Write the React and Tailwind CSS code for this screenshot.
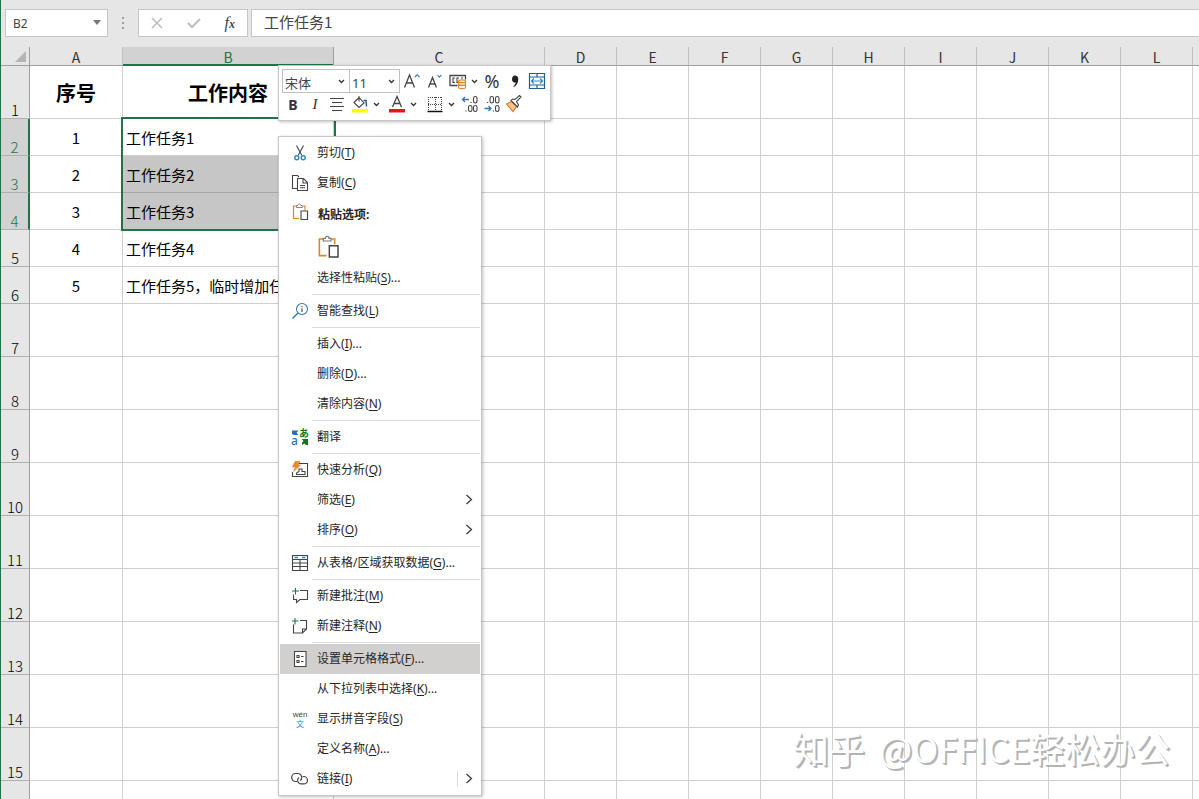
import React from 'react';

const columns = ['A', 'B', 'C', 'D', 'E', 'F', 'G', 'H', 'I', 'J', 'K', 'L', ''];

const rows = [
  { id: 1, tall: true, no: '序号', task: '工作内容' },
  { id: 2, no: '1', task: '工作任务1' },
  { id: 3, no: '2', task: '工作任务2' },
  { id: 4, no: '3', task: '工作任务3' },
  { id: 5, no: '4', task: '工作任务4' },
  { id: 6, no: '5', task: '工作任务5，临时增加任务' },
  ...[7, 8, 9, 10, 11, 12, 13, 14, 15].map((id) => ({ id, tall: true })),
  { id: '', tall: true },
];

const isSelected = (id) => id >= 2 && id <= 4;

const Icon = ({ children, size = 18, className = '' }) => (
  <svg width={size} height={size} viewBox="0 0 18 18" fill="none" stroke="#444" strokeWidth="1.1" className={className} aria-hidden="true">
    {children}
  </svg>
);

const CutIcon = () => (
  <Icon>
    <path d="M5.5 1.5l5.4 10M12.5 1.5l-5.4 10" />
    <circle cx="5.8" cy="13.8" r="2" stroke="#2b88c8" strokeWidth="1.4" />
    <circle cx="12.2" cy="13.8" r="2" stroke="#2b88c8" strokeWidth="1.4" />
  </Icon>
);

const CopyIcon = () => (
  <Icon>
    <path d="M6.5 14.5h-5v-13h5l1.5 1.5M6.500 4.500h6l4 4v8h-10zM12 4.500v4.500h4.500M9 11.500h5M9 13.800h5" />
  </Icon>
);

const PasteIcon = ({ size = 18 }) => (
  <Icon size={size}>
    <path d="M8 15.500h-5.500v-12.500h3M11.500 3h2.500v4" stroke="#e0862a" strokeWidth="1.2" />
    <path d="M5.500 4.500v-2h1.500c0-1 .6-1.500 1.400-1.500s1.400.5 1.400 1.500h1.500v2z" fill="#fff" stroke="#777" strokeWidth=".9" />
    <path d="M10 8h6.500v8.500h-6.500z" fill="#fff" />
  </Icon>
);

const LookupIcon = () => (
  <Icon>
    <circle cx="11" cy="7" r="5.500" stroke="#2b78b8" />
    <path d="M7 11l-5.500 5.500" stroke="#2b78b8" strokeWidth="1.500" />
    <path d="M11 6.300v3.700M11 4v1.200" />
  </Icon>
);

const TranslateIcon = () => (
  <span className="relative block size-[18px]" aria-hidden="true">
    <Icon>
      <path d="M1 2.500h6.500l-2 2.200 2 2.300h-4.500l-2-1z" fill="#1e6fb8" stroke="none" />
      <path d="M10.500 11h6.500v6h-2l-1.500-1.500-2.500 1.500v-2.500l1.500-1.500z" fill="#107c10" stroke="none" />
    </Icon>
    <span className="absolute left-0 top-[7px] text-[12px] font-medium leading-[12px] text-[#1e6fb8]">a</span>
    <span className="absolute left-[8px] top-0 text-[10px] font-bold leading-[10px] text-[#107c10]">あ</span>
  </span>
);

const AnalysisIcon = () => (
  <Icon>
    <path d="M8 2.500h8.500v13h-15v-4.500M5.500 13.500h8.500v-3h-3v-2.500h-3v2.500l-2.500 1.500z" />
    <path d="M4 .5h5l-2 3.500h2.500l-7 6.500 2-4.500h-3z" fill="#ed8b2c" stroke="#d86f10" strokeWidth=".5" />
  </Icon>
);

const TableIcon = () => (
  <Icon>
    <path d="M1.500 1.500h15v15h-15zM1.500 5.500h15M1.500 9h15M1.500 12.500h15M9 5.500v11" />
    <path d="M3.500 3.500h3.500M11 3.500h3.500" stroke="#2b88c8" strokeWidth="1.500" />
  </Icon>
);

const CommentIcon = () => (
  <Icon>
    <path d="M9 3.500h7.500v9h-7.500l-3.500 3v-3h-3v-5" />
    <path d="M4.500 1v6.500M1 4h7" stroke="#217346" />
  </Icon>
);

const NoteIcon = () => (
  <Icon>
    <path d="M9 3.500h6.500v8.500l-4 4h-9v-8.500M15.500 12h-4v4" />
    <path d="M4 1v6.500M1 4h6.500" stroke="#217346" />
  </Icon>
);

const FormatIcon = () => (
  <Icon>
    <path d="M3.500 1.500h11.500v15h-11.500z" fill="#fff" />
    <path d="M6 5.500h2v2h-2zM6 10.500h2v2h-2zM10 6.500h2.500M10 11.500h2.500" />
  </Icon>
);

const PinyinIcon = () => (
  <span className="flex w-[18px] flex-col items-center text-[8px] leading-[9px]" aria-hidden="true">
    <span className="font-['Liberation_Sans',sans-serif] text-[#444]">wén</span>
    <span className="font-['Noto_Sans_CJK_SC',sans-serif] text-[#2b88c8]">文</span>
  </span>
);

const LinkIcon = () => (
  <Icon>
    <path d="M6 11.500h-1.300a4 4 0 010-8h2a4 4 0 014 4q0 2-1.500 3" strokeWidth="1.200" />
    <path d="M11.500 6.500h1.300a3.700 3.700 0 010 7.400h-2.500a3.700 3.700 0 01-3.700-3.700q0-1.800 1.500-2.800" strokeWidth="1.200" />
  </Icon>
);

const ChevronDown = () => (
  <svg width="7" height="5" viewBox="0 0 7 5" fill="none" stroke="#333" strokeWidth="1.300" className="shrink-0" aria-hidden="true">
    <path d="M1 1l2.500 2.500 2.500-2.500" />
  </svg>
);

const menu = [
  { label: '剪切', hotkey: 'T', icon: <CutIcon /> },
  { label: '复制', hotkey: 'C', icon: <CopyIcon /> },
  { heading: '粘贴选项:' },
  { label: '选择性粘贴', hotkey: 'S', more: true },
  { divider: true },
  { label: '智能查找', hotkey: 'L', icon: <LookupIcon /> },
  { divider: true },
  { label: '插入', hotkey: 'I', more: true },
  { label: '删除', hotkey: 'D', more: true },
  { label: '清除内容', hotkey: 'N' },
  { divider: true },
  { label: '翻译', icon: <TranslateIcon /> },
  { divider: true },
  { label: '快速分析', hotkey: 'Q', icon: <AnalysisIcon /> },
  { label: '筛选', hotkey: 'E', submenu: true },
  { label: '排序', hotkey: 'O', submenu: true },
  { divider: true },
  { label: '从表格/区域获取数据', hotkey: 'G', more: true, icon: <TableIcon /> },
  { divider: true },
  { label: '新建批注', hotkey: 'M', icon: <CommentIcon /> },
  { label: '新建注释', hotkey: 'N', icon: <NoteIcon /> },
  { divider: true },
  { label: '设置单元格格式', hotkey: 'F', more: true, icon: <FormatIcon />, active: true },
  { label: '从下拉列表中选择', hotkey: 'K', more: true },
  { label: '显示拼音字段', hotkey: 'S', icon: <PinyinIcon /> },
  { label: '定义名称', hotkey: 'A', more: true },
  { label: '链接', hotkey: 'I', icon: <LinkIcon />, submenu: true, split: true },
];

const MenuItem = ({ item }) => {
  if (item.divider) {
    return <hr className="my-px ml-8 border-t border-[#dcdcdc]" />;
  }

  if (item.heading) {
    return (
      <div>
        <div className="flex h-8 items-center">
          <span className="flex w-[37px] shrink-0 justify-center pb-1 pl-[3px]"><PasteIcon /></span>
          <span className="pl-px pt-[2px] font-bold">{item.heading}</span>
        </div>
        <button type="button" aria-label="粘贴" className="ml-9 flex h-[33px] items-center">
          <PasteIcon size={24} />
        </button>
      </div>
    );
  }

  return (
    <button type="button" className={`flex h-[30px] w-full items-center pb-px text-left ${item.active ? 'bg-[#d2d0ce]' : ''}`}>
      <span className="flex w-[37px] shrink-0 justify-center pl-[3px]">{item.icon}</span>
      <span className="grow whitespace-nowrap">
        {item.label}
        {item.hotkey && <>(<u className="underline-offset-2">{item.hotkey}</u>)</>}
        {item.more && '...'}
      </span>
      {item.submenu && (
        <span className={`flex h-4 w-[23px] items-center justify-center ${item.split ? 'border-l border-[#dcdcdc]' : ''}`}>
          <svg width="8" height="12" viewBox="0 0 8 12" fill="none" stroke="#333" strokeWidth="1.200" aria-hidden="true">
            <path d="M1.500 1l5 4.500-5 4.500" />
          </svg>
        </span>
      )}
    </button>
  );
};

const ContextMenu = () => (
  <div className="absolute left-[277px] top-[136px] z-20 w-[204px] border border-[#c6c6c6] bg-white p-px font-['Noto_Sans','Noto_Sans_CJK_SC',sans-serif] text-[12px] leading-[16px] text-[#262626] shadow-[1px_1px_3px_rgba(0,0,0,0.25)]">
    {menu.map((item, i) => <MenuItem key={i} item={item} />)}
  </div>
);

const FontBox = ({ label, value, className }) => (
  <div className={`relative h-6 border border-[#c0c0c0] ${className}`}>
    <select aria-label={label} className="h-full w-full appearance-none bg-transparent px-[2px] pb-1 text-[13px] leading-[18px] text-[#444]">
      <option>{value}</option>
    </select>
    <span className="pointer-events-none absolute right-1 top-[9px]"><ChevronDown /></span>
  </div>
);

const Tool = ({ label, className = '', children }) => (
  <button type="button" aria-label={label} className={`flex h-5 shrink-0 items-center justify-center ${className}`}>
    {children}
  </button>
);

const MiniToolbar = () => (
  <div className="absolute left-[277px] top-[65px] z-20 w-[273px] border border-[#c6c6c6] bg-white px-[3px] pb-[6px] pt-[3px] font-['Noto_Sans','Noto_Sans_CJK_SC',sans-serif] text-[#333] shadow-[1px_1px_3px_rgba(0,0,0,0.25)]">
    <div className="flex items-center">
      <FontBox label="字体" value="宋体" className="w-[68px]" />
      <FontBox label="字号" value="11" className="w-[50px] border-l-0" />
      <Tool label="增大字号" className="w-6">
        <Icon>
          <path d="M1.500 15.500l5-12.500 5 12.500M3.300 11h6.400" strokeWidth="1.300" />
          <path d="M12 5l2.200-2.300 2.200 2.300" stroke="#2b78b8" />
        </Icon>
      </Tool>
      <Tool label="减小字号" className="w-[22px]">
        <Icon>
          <path d="M2.500 15.500l4-10 4 10M4 12h5" strokeWidth="1.300" />
          <path d="M11.500 3l2 2.200 2-2.200" stroke="#2b78b8" />
        </Icon>
      </Tool>
      <Tool label="会计数字格式" className="w-[34px] gap-1">
        <Icon>
          <path d="M8.500 13.500h-7.500v-10h15.500v4" strokeWidth="1.300" />
          <path d="M6 6h-2v4.500h2M10 6h-2v4.500h1M12 6h2" />
          <path d="M9.500 9c0-1.500 7-1.500 7 0v6.500c0 1.500-7 1.500-7 0z" fill="#fff" stroke="#e0862a" />
          <path d="M9.500 10.500h7M9.500 13.300h7" stroke="#e0862a" strokeWidth="1.500" />
        </Icon>
        <ChevronDown />
      </Tool>
      <Tool label="百分比样式" className="w-6 text-[18px] leading-[20px]">%</Tool>
      <Tool label="千位分隔样式" className="w-[22px]">
        <Icon>
          <path d="M9 3.500c2 0 3.300 1.300 3.300 3.700 0 3.500-1.800 6.300-4.500 7.800l-.5-.8c1.500-1.100 2.300-2.400 2.400-3.700-2 .4-3.700-1-3.700-3.300 0-2.200 1.200-3.700 3-3.700z" fill="#222" stroke="none" />
        </Icon>
      </Tool>
      <Tool label="合并后居中" className="w-[21px]">
        <Icon>
          <path d="M1.500 1.500h15v15h-15zM1.500 5h15M1.500 13h15M9 1.500v3.500M9 13v3.500" stroke="#245f8a" strokeWidth="1.200" />
          <path d="M3.500 9h11M6 6.500l-2.500 2.500 2.500 2.500M12 6.500l2.500 2.500-2.500 2.500" stroke="#2b88c8" strokeWidth="1.200" />
        </Icon>
      </Tool>
    </div>
    <div className="mt-px flex items-center">
      <Tool label="加粗" className="w-[22px] text-[14px] font-bold">B</Tool>
      <Tool label="倾斜" className="w-[22px] font-['Liberation_Serif',serif] text-[15px] italic">I</Tool>
      <Tool label="居中" className="w-[22px]">
        <Icon>
          <path d="M2 3.500h14M4 7.500h10M2 11.500h14M4 15.500h10" strokeWidth="1.200" />
        </Icon>
      </Tool>
      <Tool label="填充颜色" className="w-[35px] gap-1">
        <Icon>
          <path d="M3 7.500l5-5 5 5.500-5 4.500zM8 1v5.500" />
          <path d="M12.500 5.500l2.500 0 .5 6" stroke="#2b5f8a" strokeWidth="1.500" />
          <path d="M1 14h16v3.500h-16z" fill="#ffff00" stroke="none" />
        </Icon>
        <ChevronDown />
      </Tool>
      <Tool label="字体颜色" className="w-[38px] gap-1">
        <Icon>
          <path d="M4.500 12l4.500-10.500 4.500 10.500M6 8.500h6" strokeWidth="1.300" />
          <path d="M1 14h16v3.500h-16z" fill="#e0181c" stroke="none" />
        </Icon>
        <ChevronDown />
      </Tool>
      <Tool label="边框" className="w-[38px] gap-1">
        <Icon>
          <path d="M2 2.500h14M2.500 2v14M9.500 2v14M15.500 2v14M2 9.500h14" strokeDasharray="1 1" />
          <path d="M1.500 16.500h15" stroke="#111" strokeWidth="1.500" />
        </Icon>
        <ChevronDown />
      </Tool>
      <Tool label="增加小数位数" className="w-[22px]">
        <Icon>
          <path d="M8 4.500h-6.500M4 2l-2.500 2.500 2.500 2.500" stroke="#2b78b8" strokeWidth="1.300" />
          <rect x="12.500" y="1.500" width="3.500" height="6.500" rx="1.700" />
          <rect x="7.500" y="10.500" width="3.500" height="6" rx="1.700" />
          <rect x="12.500" y="10.500" width="3.500" height="6" rx="1.700" />
          <path d="M9.500 7.500h1.200M4.500 16h1.200" />
        </Icon>
      </Tool>
      <Tool label="减少小数位数" className="w-[22px]">
        <Icon>
          <path d="M1.500 13.500h6.500M5.500 11l2.500 2.500-2.500 2.500" stroke="#2b78b8" strokeWidth="1.300" />
          <rect x="7" y="1.500" width="3.500" height="6.500" rx="1.700" />
          <rect x="12.500" y="1.500" width="3.500" height="6.500" rx="1.700" />
          <rect x="12.500" y="10.500" width="3.500" height="6" rx="1.700" />
          <path d="M4 7.500h1.200M9.800 16h1.200" />
        </Icon>
      </Tool>
      <Tool label="格式刷" className="w-[22px]">
        <Icon>
          <path d="M1.500 9l5-2.500 5 5-3.500 5z" fill="#f9c48c" stroke="#d9782a" />
          <path d="M6 5.500l6.500 6.500 1-2-2-3.500 4.500-4.500-1.500-1.500-4.500 4-2.500-.5z" fill="#fff" />
        </Icon>
      </Tool>
    </div>
  </div>
);

const FormulaBar = () => (
  <div className="flex h-[47px] shrink-0 items-start bg-[#e6e6e6] pl-1 pt-[9px] font-['Noto_Sans','Noto_Sans_CJK_SC',sans-serif]">
    <div className="relative h-7 w-[103px] shrink-0 border border-[#c6c6c6] bg-white">
      <input aria-label="名称框" defaultValue="B2" className="h-full w-full bg-transparent px-[7px] text-[12px] text-[#444]" />
      <span className="pointer-events-none absolute right-[6px] top-[10px] border-x-4 border-t-[5px] border-x-transparent border-t-[#777]" />
    </div>
    <div className="flex h-7 w-[30px] shrink-0 flex-col items-center justify-center gap-[3px]">
      <i className="size-[2px] bg-[#a0a0a0]" />
      <i className="size-[2px] bg-[#a0a0a0]" />
      <i className="size-[2px] bg-[#a0a0a0]" />
    </div>
    <div className="flex h-7 w-[110px] shrink-0 items-center justify-around border border-[#c6c6c6] bg-white">
      <button type="button" aria-label="取消">
        <svg width="12" height="12" viewBox="0 0 12 12" fill="none" stroke="#bdbdbd" strokeWidth="1.600"><path d="M1 1l10 10M11 1l-10 10" /></svg>
      </button>
      <button type="button" aria-label="输入">
        <svg width="14" height="12" viewBox="0 0 14 12" fill="none" stroke="#bdbdbd" strokeWidth="2"><path d="M1 6l4 4 8-8" /></svg>
      </button>
      <button type="button" aria-label="插入函数" className="font-['Liberation_Serif',serif] text-[16px] italic leading-[20px] text-[#444]">
        f<span className="text-[12px] font-bold">x</span>
      </button>
    </div>
    <input aria-label="编辑栏" defaultValue="工作任务1" className="ml-[3px] h-7 min-w-0 grow border border-r-0 border-[#c6c6c6] bg-white px-3 pb-1 font-['Noto_Sans_CJK_SC',sans-serif] text-[15px] text-[#444]" />
  </div>
);

const Sheet = () => (
  <table className="w-full table-fixed border-separate border-spacing-0 font-['Noto_Sans_CJK_SC',sans-serif] text-[15px]">
    <colgroup>
      <col className="w-[29px]" />
      <col className="w-[93px]" />
      <col className="w-[211px]" />
      <col className="w-[211px]" />
      {columns.slice(3, 12).map((name) => <col key={name} className="w-[72px]" />)}
      <col />
    </colgroup>
    <thead>
      <tr className="h-[19px]">
        <th className="border-b border-r border-[#9f9f9f] bg-[#e6e6e6] p-0">
          <svg width="28" height="18" viewBox="0 0 28 18" className="block" aria-hidden="true"><path d="M25 4v11h-11z" fill="#b4b4b4" /></svg>
        </th>
        {columns.map((name, i) => (
          <th
            key={i}
            className={`overflow-hidden border-b border-r p-0 text-[14px] font-normal leading-[20px] last:border-r-0 ${
              name === 'B'
                ? 'border-b-[#217346] border-r-[#9f9f9f] bg-[#d2d2d2] text-[#217346] shadow-[inset_0_-1px_0_#217346]'
                : 'border-b-[#9f9f9f] border-r-[#c0c0c0] bg-[#e6e6e6] text-[#333]'
            }`}
          >
            <div className="h-[18px]">{name}</div>
          </th>
        ))}
      </tr>
    </thead>
    <tbody>
      {rows.map((row) => (
        <tr key={row.id} className={row.tall ? 'h-[53px]' : 'h-[37px]'}>
          <th
            className={`border-b p-0 align-bottom font-light leading-[16px] ${
              isSelected(row.id) ? 'border-b-[#b0b0b0] border-r-2 border-r-[#217346] bg-[#d2d2d2] text-[#217346]' : 'border-b-[#b0b0b0] border-r border-r-[#9f9f9f] bg-[#e6e6e6] text-black'
            }`}
          >
            {row.id}
          </th>
          {columns.map((name, i) => {
            const header = row.id === 1;
            const shaded = name === 'B' && (row.id === 3 || row.id === 4);
            return (
              <td
                key={i}
                className={`relative whitespace-nowrap border-b border-r p-0 pt-[2px] text-black last:border-r-0 ${shaded ? 'border-[#a6a6a6] bg-[#c6c6c6]' : 'border-[#d0d0d0]'} ${
                  name === 'B' && !header ? 'pl-[3px] text-left' : 'text-center'
                } ${header ? 'text-[20px] font-bold' : ''}`}
              >
                {name === 'A' && row.no}
                {name === 'B' && row.task}
                {name === 'B' && row.id === 2 && (
                  <span className="pointer-events-none absolute -left-[2px] -top-[2px] z-10 h-[114px] w-[215px] border-2 border-[#217346]" />
                )}
              </td>
            );
          })}
        </tr>
      ))}
    </tbody>
  </table>
);

const App = () => {
  return (
    <div className="relative flex h-screen flex-col overflow-hidden border-l border-[#217346] bg-white">
      <FormulaBar />
      <Sheet />
      <div className="absolute bottom-[26px] right-[29px] flex gap-[14px] font-['Noto_Sans_CJK_SC',sans-serif] text-[35px] leading-[50px] text-white [text-shadow:1px_1px_0_#b4b4b4,2px_2px_0_#b4b4b4]">
        <span className="text-[36px]">知乎</span>
        <span>@OFFICE轻松办公</span>
      </div>
      <MiniToolbar />
      <ContextMenu />
    </div>
  );
};

export default App;
